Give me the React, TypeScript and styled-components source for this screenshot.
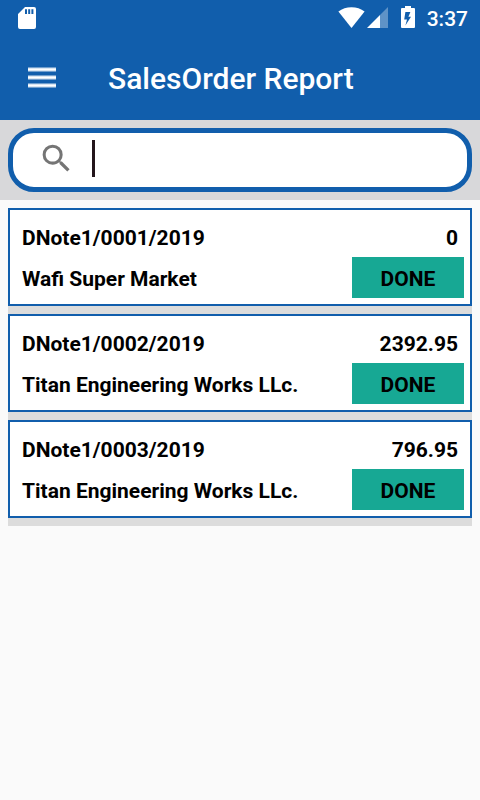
import React from "react";
import styled, { createGlobalStyle } from "styled-components";

const GlobalStyle = createGlobalStyle`
  * { box-sizing: border-box; }
  body {
    margin: 0;
    background: #fafafa;
    color: #000;
    font-family: Roboto, "Liberation Sans", sans-serif;
  }
`;

const StatusBar = styled.div`
  display: flex;
  align-items: center;
  justify-content: space-between;
  height: 36px;
  padding: 0 12px 0 18px;
  background: #115eac;
  color: #fff;
`;

const StatusIcons = styled.div`
  display: flex;
  align-items: center;
`;

const Glyph = styled.svg<{ $gap?: number }>`
  display: block;
  flex: none;
  margin-right: ${({ $gap = 0 }) => $gap}px;
`;

const Clock = styled.time`
  padding-top: 2px;
  font-size: 21px;
  line-height: 36px;
  font-weight: 500;
`;

const AppBar = styled.header`
  display: flex;
  align-items: center;
  height: 84px;
  padding: 0 28px;
  gap: 52px;
  background: #115eac;
  color: #fff;
`;

const MenuButton = styled.button`
  display: flex;
  padding: 0;
  border: 0;
  background: none;
  color: inherit;
`;

const Title = styled.h1`
  margin: 0;
  padding-top: 2px;
  font-size: 30px;
  line-height: 36px;
  font-weight: 500;
`;

const SearchPanel = styled.div`
  padding: 8px;
  background: #d8d8da;
`;

const SearchField = styled.label`
  display: flex;
  align-items: center;
  height: 64px;
  padding: 0 24px 3px 25px;
  border: 5px solid #115eac;
  border-radius: 26px;
  background: #fff;
`;

const Caret = styled.span`
  flex: none;
  width: 3px;
  height: 37px;
  background: #23151b;
`;

const SearchInput = styled.input`
  flex: 1;
  min-width: 0;
  height: 40px;
  padding: 0;
  border: 0;
  outline: 0;
  background: transparent;
  font: 400 24px Roboto, sans-serif;
`;

const OrderList = styled.ul`
  display: flex;
  flex-direction: column;
  gap: 8px;
  margin: 8px;
  padding: 0 0 8px;
  list-style: none;
  background: #dcdcdc;
`;

const OrderCard = styled.li`
  padding: 6px;
  border: 2px solid #115eac;
  background: #fff;
`;

const OrderRow = styled.div`
  display: flex;
  align-items: center;
  justify-content: space-between;
  height: 41px;
  padding-left: 6px;
`;

const OrderText = styled.span<{ $amount?: boolean }>`
  padding-top: 2px;
  padding-right: ${({ $amount }) => ($amount ? 6 : 0)}px;
  font-size: 21px;
  line-height: 24px;
  font-weight: 700;
`;

const DoneButton = styled.button`
  width: 112px;
  height: 41px;
  padding: 2px 0 0;
  border: 0;
  background: #17a894;
  color: #000;
  font: 700 21px/24px Roboto, sans-serif;
`;

const orders = [
  { note: "DNote1/0001/2019", amount: "0", customer: "Wafi Super Market" },
  { note: "DNote1/0002/2019", amount: "2392.95", customer: "Titan Engineering Works LLc." },
  { note: "DNote1/0003/2019", amount: "796.95", customer: "Titan Engineering Works LLc." },
];

export default function App() {
  return (
    <>
      <GlobalStyle />
      <StatusBar>
        <Glyph width="18" height="22" viewBox="0 0 18 22" fill="currentColor" aria-hidden="true">
          <path
            fillRule="evenodd"
            d="M7 0H16Q18 0 18 2V20Q18 22 16 22H2Q0 22 0 20V7ZM7 2.2V7H9V2.2ZM10.2 2.2V7H12.2V2.2ZM13.4 2.2V7H15.4V2.2Z"
          />
        </Glyph>
        <StatusIcons>
          <Glyph $gap={2} width="27" height="22" viewBox="0 0 27 22" fill="currentColor" aria-hidden="true">
            <path d="M13.5 21L.4 4.6Q6 .2 13.5.2T26.6 4.6Z" />
          </Glyph>
          <Glyph $gap={13} width="21" height="22" viewBox="0 0 21 22" fill="currentColor" aria-hidden="true">
            <path fillOpacity=".33" d="M13 8L21 0V21H13Z" />
            <path d="M0 21L13 8V21Z" />
          </Glyph>
          <Glyph $gap={12} width="14" height="24" viewBox="0 0 14 24" fill="currentColor" aria-hidden="true">
            <path
              fillRule="evenodd"
              d="M4 0H10V2H13Q14 2 14 3V21Q14 22 13 22H1Q0 22 0 21V3Q0 2 1 2H4ZM4.4 6L3.2 13.5H6L4.4 19.6L10 10.8H7.4L9.4 6Z"
            />
          </Glyph>
          <Clock>3:37</Clock>
        </StatusIcons>
      </StatusBar>
      <AppBar>
        <MenuButton type="button" aria-label="Open menu">
          <Glyph width="28" height="22" viewBox="0 0 28 22" fill="currentColor" aria-hidden="true">
            <path fillOpacity=".4" d="M0 0H28V5H0ZM0 8H28V13H0ZM0 16H28V21H0Z" />
            <path fillOpacity=".75" d="M0 1H28V4H0ZM0 9H28V12H0ZM0 17H28V20H0Z" />
            <path d="M0 2H28V3H0ZM0 10H28V11H0ZM0 18H28V19H0Z" />
          </Glyph>
        </MenuButton>
        <Title>SalesOrder Report</Title>
      </AppBar>
      <main>
        <SearchPanel>
          <SearchField>
            <Glyph $gap={17} width="37" height="37" viewBox="0 0 24 24" fill="#757575" aria-hidden="true">
              <path d="M15.5 14h-.79l-.28-.27A6.47 6.47 0 0 0 16 9.5 6.5 6.5 0 1 0 9.5 16c1.61 0 3.09-.59 4.23-1.57l.27.28v.79l5 4.99L20.49 19l-4.99-5zm-6 0C7.01 14 5 11.99 5 9.5S7.01 5 9.5 5 14 7.01 14 9.5 11.99 14 9.5 14z" />
            </Glyph>
            <Caret />
            <SearchInput type="search" aria-label="Search sales orders" />
          </SearchField>
        </SearchPanel>
        <OrderList>
          {orders.map((order) => (
            <OrderCard key={order.note}>
              <OrderRow>
                <OrderText>{order.note}</OrderText>
                <OrderText $amount>{order.amount}</OrderText>
              </OrderRow>
              <OrderRow>
                <OrderText>{order.customer}</OrderText>
                <DoneButton type="button">DONE</DoneButton>
              </OrderRow>
            </OrderCard>
          ))}
        </OrderList>
      </main>
    </>
  );
}
